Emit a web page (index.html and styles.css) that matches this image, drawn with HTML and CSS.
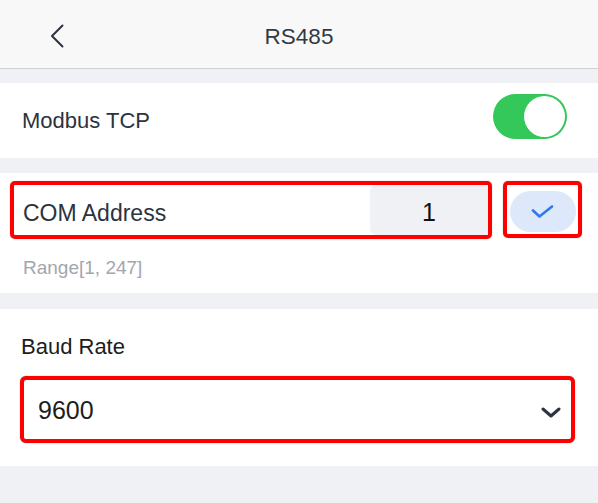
FILE: index.html
```html
<!DOCTYPE html>
<html lang="en">
<head>
<meta charset="utf-8">
<title>RS485</title>
<link rel="stylesheet" href="styles.css">
</head>
<body>
<header class="topbar">
  <div class="back">
    <svg width="14" height="24" viewBox="0 0 14 24"><polyline points="12.5,1.5 2,12 12.5,22.5" fill="none" stroke="#2c3440" stroke-width="2" stroke-linecap="round" stroke-linejoin="round"/></svg>
  </div>
  <h1 class="title">RS485</h1>
  <div></div>
</header>

<section class="card switch-row">
  <span class="label">Modbus TCP</span>
  <span class="toggle"><span class="knob"></span></span>
</section>

<section class="card com">
  <div class="com-row">
    <div class="field">
      <span class="label field-label">COM Address</span>
      <span class="value-box"><span class="value">1</span></span>
    </div>
    <div class="confirm">
      <span class="pill">
        <svg width="23" height="13" viewBox="0 0 23 13"><polyline points="2,5.5 8.5,11.5 21,1.5" fill="none" stroke="#2f7be5" stroke-width="2.6" stroke-linecap="round" stroke-linejoin="round"/></svg>
      </span>
    </div>
  </div>
  <p class="hint">Range[1, 247]</p>
</section>

<section class="card baud">
  <div class="label baud-label">Baud Rate</div>
  <div class="select">
    <span class="select-value">9600</span>
    <svg class="chev" width="20" height="11" viewBox="0 0 20 11"><polyline points="2,2 10,9 18,2" fill="none" stroke="#2c3440" stroke-width="3" stroke-linecap="round" stroke-linejoin="round"/></svg>
  </div>
</section>
</body>
</html>
```

FILE: styles.css
```css
* { box-sizing: border-box; }

html, body {
  margin: 0;
  padding: 0;
}

body {
  background: #f0f1f5;
  font-family: "Liberation Sans", Arial, Helvetica, sans-serif;
  min-height: 503px;
}

.topbar {
  height: 69px;
  background: #f8f8f8;
  border-bottom: 1px solid #cfd3d6;
  display: grid;
  grid-template-columns: 1fr auto 1fr;
  align-items: start;
  padding-top: 24px;
}

.back {
  padding-left: 50px;
}

.back svg {
  display: block;
}

.title {
  margin: 1px 0 0;
  font-size: 22.5px;
  line-height: 24px;
  font-weight: normal;
  color: #343a44;
}

.card {
  background: #ffffff;
}

.label {
  font-size: 22px;
  line-height: 24px;
  color: #2b3340;
}

.switch-row {
  margin-top: 14px;
  height: 75px;
  display: flex;
  align-items: center;
  justify-content: space-between;
  padding: 0 31px 0 22px;
}

.toggle {
  width: 74px;
  height: 45px;
  border-radius: 23px;
  background: #34c759;
  display: flex;
  align-items: center;
  justify-content: flex-end;
  padding: 2px;
  margin-bottom: 8px;
}

.knob {
  width: 41px;
  height: 41px;
  border-radius: 50%;
  background: #ffffff;
}

.com {
  margin-top: 15px;
  padding: 8px 16px 15px 10px;
}

.com-row {
  display: flex;
  gap: 11px;
}

.field {
  width: 482px;
  height: 58px;
  border: 4px solid #ff0000;
  border-radius: 5px;
  box-shadow: 0 0 1px rgba(0, 0, 0, 0.5);
  display: flex;
  align-items: center;
  padding-left: 9px;
}

.field-label {
  font-size: 23px;
  margin-top: 5px;
}

.value-box {
  margin-left: auto;
  width: 118px;
  align-self: stretch;
  background: #f0f1f5;
  border-radius: 6px 1px 1px 6px;
  display: flex;
  align-items: center;
  justify-content: center;
}

.value {
  font-size: 25px;
  line-height: 28px;
  color: #111111;
  margin-top: 4px;
}

.confirm {
  width: 79px;
  height: 57px;
  border: 4px solid #ff0000;
  border-radius: 5px;
  box-shadow: 0 0 1px rgba(0, 0, 0, 0.5);
  display: flex;
  align-items: center;
  justify-content: center;
}

.pill {
  width: 66px;
  height: 41px;
  border-radius: 21px;
  background: #dde9fb;
  display: flex;
  align-items: center;
  justify-content: center;
  margin-top: 3px;
}

.pill svg {
  display: block;
}

.hint {
  margin: 19px 0 0 13px;
  font-size: 19px;
  line-height: 20px;
  color: #a3a6ad;
}

.baud {
  margin-top: 16px;
  padding: 26px 23px 23px 20px;
}

.baud-label {
  padding-left: 1px;
  color: #1c1d20;
}

.select {
  margin-top: 17px;
  height: 67px;
  border: 4px solid #ff0000;
  border-radius: 6px;
  box-shadow: 0 0 1px rgba(0, 0, 0, 0.5);
  background: #ffffff;
  display: flex;
  align-items: center;
  justify-content: space-between;
  padding: 0 10px 0 14px;
}

.select-value {
  font-size: 25px;
  line-height: 28px;
  color: #1c1d20;
}

.chev {
  display: block;
  margin-top: 5px;
}
```
